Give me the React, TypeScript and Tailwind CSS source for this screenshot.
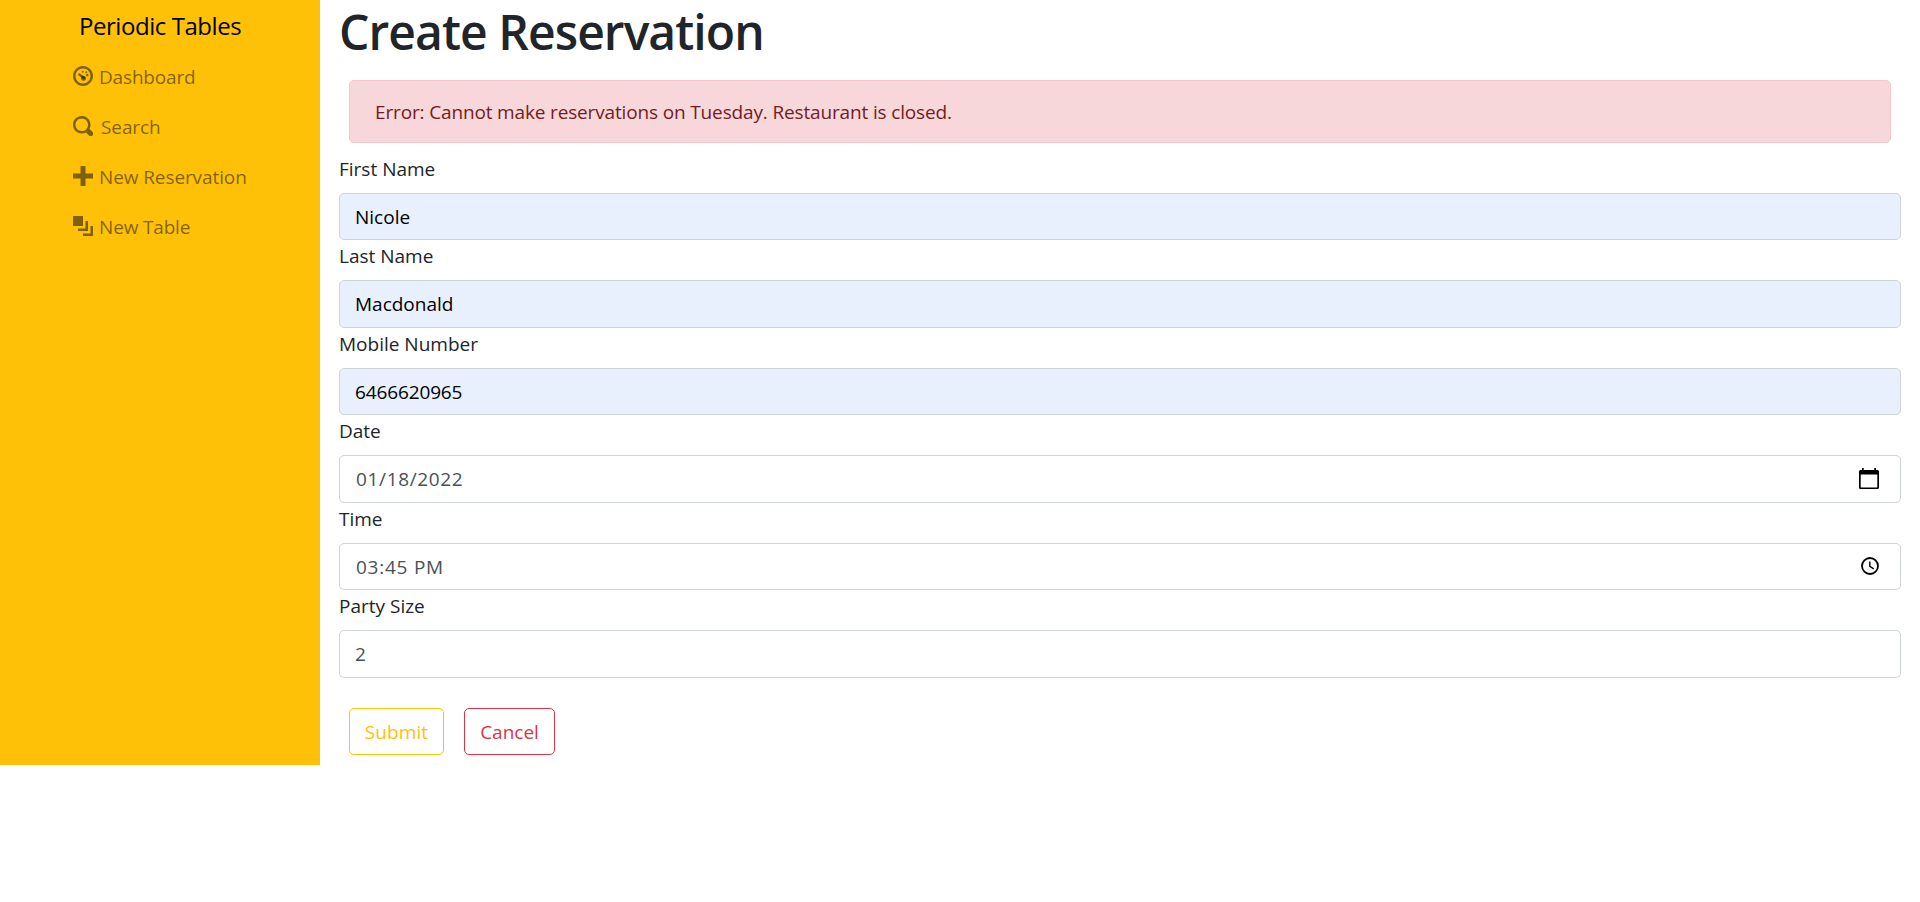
import type { ReactNode } from "react";

function Icon({ children }: { children: ReactNode }) {
  return (
    <svg viewBox="0 0 8 8" className="h-5 w-5 shrink-0" fill="currentColor" aria-hidden="true">
      {children}
    </svg>
  );
}

const dashboardIcon = (
  <>
    <path d="M4 0c-2.2 0-4 1.8-4 4s1.8 4 4 4 4-1.8 4-4-1.8-4-4-4zm0 1c1.66 0 3 1.34 3 3s-1.34 3-3 3-3-1.34-3-3 1.34-3 3-3z" />
    <path d="M2.5 3.4L4.300 4.700" stroke="currentColor" strokeWidth="0.9" strokeLinecap="round" />
    <circle cx="4.2" cy="4.85" r="1" />
    <circle cx="3.900" cy="2.300" r="0.400" />
    <circle cx="5.300" cy="2.500" r="0.400" />
    <circle cx="5.700" cy="3.600" r="0.500" />
  </>
);

const searchIcon = (
  <path d="M3.5 0c-1.93 0-3.5 1.57-3.5 3.5s1.57 3.5 3.5 3.5c.59 0 1.17-.14 1.66-.41a1 1 0 0 0 .13.13l1 1a1.02 1.02 0 1 0 1.44-1.44l-1-1a1 1 0 0 0-.16-.13c.27-.49.44-1.06.44-1.66 0-1.93-1.55-3.5-3.5-3.5zm0 1c1.39 0 2.5 1.11 2.5 2.5 0 .66-.24 1.27-.66 1.72-.01.01-.02.02-.03.03a1 1 0 0 0-.13.13c-.44.4-1.04.63-1.69.63-1.39 0-2.5-1.11-2.5-2.5s1.11-2.5 2.5-2.5z" />
);

const plusIcon = <path d="M3 0v3h-3v2h3v3h2v-3h3v-2h-3v-3z" />;

const layersIcon = <path d="M0 0v4h4v-4h-4zm5 2v3h-3v1h4v-4h-1zm2 2v3h-3v1h4v-4h-1z" />;

function NavItem({ icon, label, textClass = "" }: { icon: ReactNode; label: string; textClass?: string }) {
  return (
    <a href="#" className="flex h-[50px] items-center text-black/50">
      <Icon>{icon}</Icon>
      <span className={`pt-[2px] ${textClass}`}>{label}</span>
    </a>
  );
}

function Field({
  label,
  value,
  filled,
  valueClass = "",
  icon,
}: {
  label: string;
  value: string;
  filled?: boolean;
  valueClass?: string;
  icon?: ReactNode;
}) {
  return (
    <div className="h-[87.5px]">
      <div className="h-10 pt-px leading-[30px]">{label}</div>
      <div
        className={`flex h-[47.5px] items-center justify-between rounded-[5px] border border-[#ced4da] pl-[15px] ${
          filled ? "bg-[#e8f0fe] text-black" : "bg-white text-[#495057]"
        }`}
      >
        <span className={`pt-px ${valueClass}`}>{value}</span>
        {icon}
      </div>
    </div>
  );
}

const calendarIcon = (
  <svg viewBox="0 0 20 22" className="mr-[21px] h-[22px] w-5 text-black" fill="currentColor" aria-hidden="true">
    <path d="M3 0h1.700v2h10.600V0h1.700v2h1.500A1.500 1.500 0 0 1 20 3.500v16a1.500 1.500 0 0 1-1.500 1.500h-17A1.500 1.500 0 0 1 0 19.500v-16A1.500 1.500 0 0 1 1.500 2H3zM1.700 6.500v12.900h16.600V6.500z" />
  </svg>
);

const clockIcon = (
  <svg viewBox="0 0 20 20" className="mr-5 h-5 w-5 text-black" fill="none" stroke="currentColor" aria-hidden="true">
    <circle cx="10" cy="10" r="8" strokeWidth="1.800" />
    <path d="M9.800 5.500v4.900l4 2.400" strokeWidth="1.400" />
  </svg>
);

export default function App() {
  return (
    <div className="flex min-h-[902px] items-start bg-white font-['Open_Sans','Noto_Sans',sans-serif] text-[19px] leading-[30px] text-[#212529]">
      <nav className="h-[765px] w-80 shrink-0 bg-[#ffc107] pl-[73px]">
        <div className="flex h-[51px] items-center pl-[6px] text-[24px] tracking-[-0.450px] text-black">
          Periodic Tables
        </div>
        <NavItem icon={dashboardIcon} label="Dashboard" textClass="pl-[6px] tracking-[-0.170px]" />
        <NavItem icon={searchIcon} label="Search" textClass="pl-[8px] tracking-[-0.100px]" />
        <NavItem icon={plusIcon} label="New Reservation" textClass="pl-[6px] tracking-[-0.100px]" />
        <NavItem icon={layersIcon} label="New Table" textClass="pl-[6px] tracking-[-0.170px]" />
      </nav>

      <main className="flex-1 px-[19px]">
        <h1 className="mb-5 h-[60px] text-[48px] leading-[64px] font-semibold tracking-[-0.930px]">
          Create Reservation
        </h1>
        <div className="mx-[10px] mb-[9.5px] h-[63px] rounded-[5px] border border-[#f5c6cb] bg-[#f8d7da] px-[25px] py-4 tracking-[-0.150px] text-[#721c24]">
          Error: Cannot make reservations on Tuesday. Restaurant is closed.
        </div>
        <Field label="First Name" value="Nicole" filled />
        <Field label="Last Name" value="Macdonald" filled />
        <Field label="Mobile Number" value="6466620965" filled valueClass="tracking-[-0.130px]" />
        <Field label="Date" value="01/18/2022" valueClass="pl-px tracking-[0.650px]" icon={calendarIcon} />
        <Field label="Time" value="03:45 PM" valueClass="pl-px tracking-[0.750px]" icon={clockIcon} />
        <Field label="Party Size" value="2" />
        <div className="flex gap-5 px-[10px] pt-[30.500px]">
          <button className="h-[47px] w-[95px] rounded-[5px] border border-[#ffc107] tracking-[0.100px] text-[#ffc107]">
            Submit
          </button>
          <button className="h-[47px] w-[91px] rounded-[5px] border border-[#dc3545] text-[#dc3545]">
            Cancel
          </button>
        </div>
      </main>
    </div>
  );
}
